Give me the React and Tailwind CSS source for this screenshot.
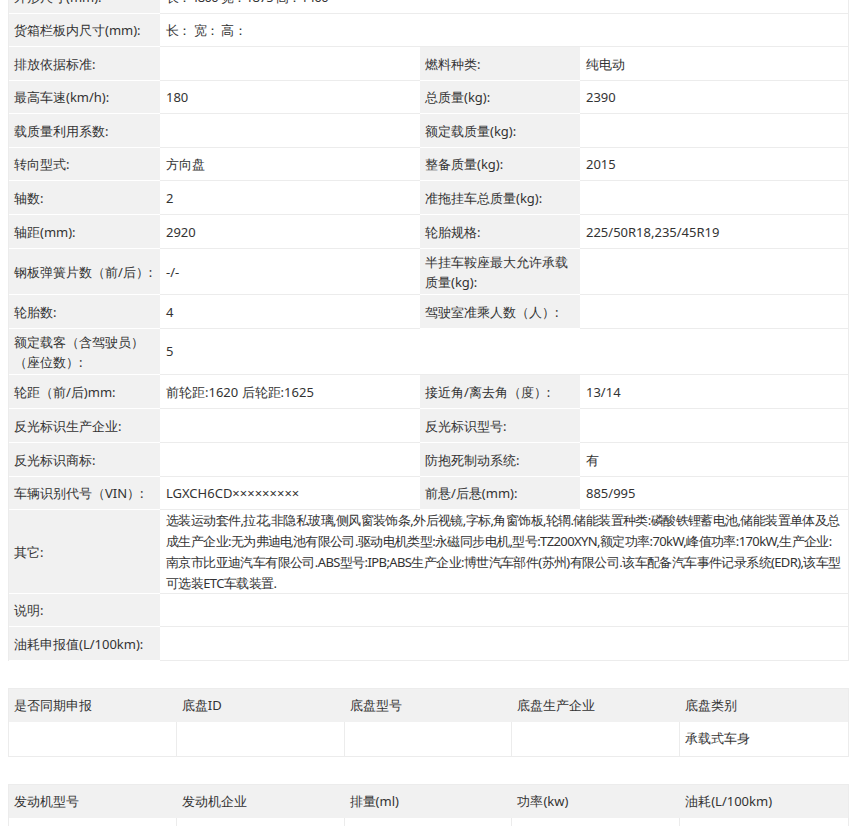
const rows = [
  ['外形尺寸(mm):', '长：4800 宽：1875 高：1460', null, null, 33],
  ['货箱栏板内尺寸(mm):', '长：  宽：  高：', null, null, 33],
  ['排放依据标准:', '', '燃料种类:', '纯电动', 34],
  ['最高车速(km/h):', '180', '总质量(kg):', '2390', 33],
  ['载质量利用系数:', '', '额定载质量(kg):', '', 34],
  ['转向型式:', '方向盘', '整备质量(kg):', '2015', 33],
  ['轴数:', '2', '准拖挂车总质量(kg):', '', 34],
  ['轴距(mm):', '2920', '轮胎规格:', '225/50R18,235/45R19', 34],
  ['钢板弹簧片数（前/后）:', '-/-', '半挂车鞍座最大允许承载质量(kg):', '', 46],
  ['轮胎数:', '4', '驾驶室准乘人数（人）:', '', 34],
  ['额定载客（含驾驶员）（座位数）:', '5', null, null, 46],
  ['轮距（前/后)mm:', '前轮距:1620 后轮距:1625', '接近角/离去角（度）:', '13/14', 34],
  ['反光标识生产企业:', '', '反光标识型号:', '', 34],
  ['反光标识商标:', '', '防抱死制动系统:', '有', 34],
  ['车辆识别代号（VIN）:', 'LGXCH6CD×××××××××', '前悬/后悬(mm):', '885/995', 33],
  ['其它:', '选装运动套件,拉花,非隐私玻璃,侧风窗装饰条,外后视镜,字标,角窗饰板,轮辋.储能装置种类:磷酸铁锂蓄电池,储能装置单体及总成生产企业:无为弗迪电池有限公司.驱动电机类型:永磁同步电机,型号:TZ200XYN,额定功率:70kW,峰值功率:170kW,生产企业:南京市比亚迪汽车有限公司.ABS型号:IPB;ABS生产企业:博世汽车部件(苏州)有限公司.该车配备汽车事件记录系统(EDR),该车型可选装ETC车载装置.', null, null, 84],
  ['说明:', '', null, null, 33],
  ['油耗申报值(L/100km):', '', null, null, 34],
];

const Label = ({ children, h }) => (
  <div className="bg-[#f1f1f1] px-[5px] flex items-center leading-[20px] border-b border-white" style={{ height: h }}>
    {children}
  </div>
);
const Val = ({ children, h }) => (
  <div className="bg-white px-[6px] flex items-center leading-[20px] border-b border-[#ececec]" style={{ height: h }}>
    {children}
  </div>
);

function SubTable({ head, body }) {
  return (
    <div className="grid grid-cols-5 border border-[#ececec]">
      {head.map((h) => (
        <div key={h} className="bg-[#f1f1f1] h-[33px] px-[5px] flex items-center">{h}</div>
      ))}
      {body.map((b, i) => (
        <div key={i} className="bg-white h-[34px] px-[5px] flex items-center border-r border-[#ececec] last:border-r-0">{b}</div>
      ))}
    </div>
  );
}

export default function App() {
  return (
    <div className="w-[852px] h-[826px] overflow-hidden bg-white text-[13px] text-[#333] font-['Liberation_Sans','Noto_Sans_CJK_SC',sans-serif]">
      <div className="ml-[8px] mr-[3px] mt-[-19px] grid grid-cols-[151px_260px_160px_1fr] border-x border-[#ececec]">
        {rows.map(([l1, v1, l2, v2, h], i) =>
          l2 === null ? (
            <div key={i} className="contents">
              <Label h={h}>{l1}</Label>
              <div className="col-span-3 bg-white px-[6px] flex items-center leading-[21px] tracking-[-0.6px] border-b border-[#ececec]" style={{ height: h }}>
                {v1}
              </div>
            </div>
          ) : (
            <div key={i} className="contents">
              <Label h={h}>{l1}</Label>
              <Val h={h}>{v1}</Val>
              <Label h={h}>{l2}</Label>
              <Val h={h}>{v2}</Val>
            </div>
          )
        )}
      </div>
      <div className="ml-[8px] mr-[3px] mt-[27px]">
        <SubTable head={['是否同期申报', '底盘ID', '底盘型号', '底盘生产企业', '底盘类别']} body={['', '', '', '', '承载式车身']} />
      </div>
      <div className="ml-[8px] mr-[3px] mt-[27px]">
        <SubTable head={['发动机型号', '发动机企业', '排量(ml)', '功率(kw)', '油耗(L/100km)']} body={['', '', '', '', '']} />
      </div>
    </div>
  );
}
